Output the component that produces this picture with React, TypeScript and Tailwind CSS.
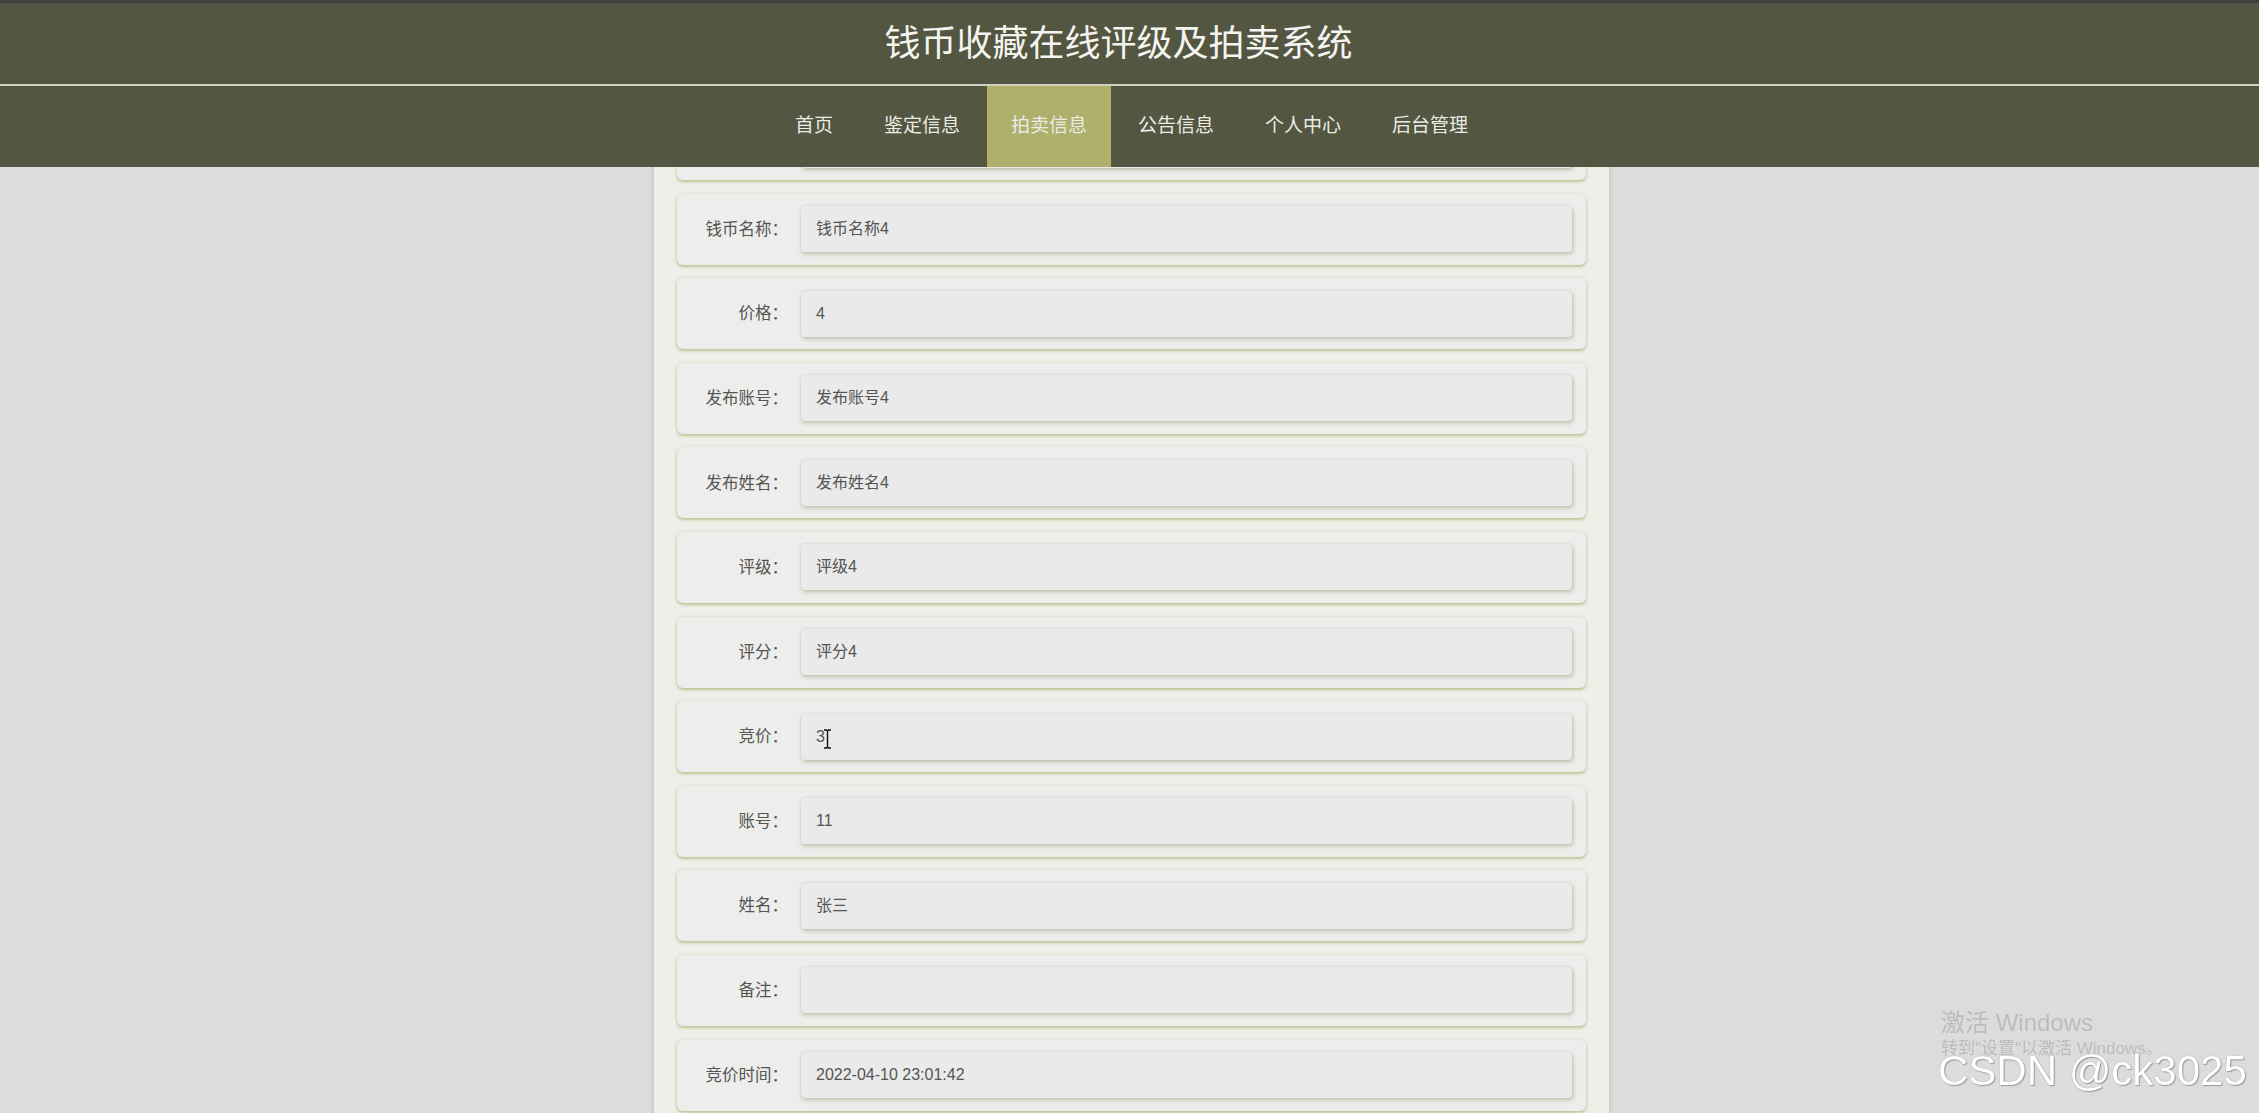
import React from 'react';

interface Field {
  label: string;
  value: string;
  cursor?: boolean;
}

const navItems = ['首页', '鉴定信息', '拍卖信息', '公告信息', '个人中心', '后台管理'];

const fields: Field[] = [
  { label: '钱币编号：', value: '4' },
  { label: '钱币名称：', value: '钱币名称4' },
  { label: '价格：', value: '4' },
  { label: '发布账号：', value: '发布账号4' },
  { label: '发布姓名：', value: '发布姓名4' },
  { label: '评级：', value: '评级4' },
  { label: '评分：', value: '评分4' },
  { label: '竞价：', value: '3', cursor: true },
  { label: '账号：', value: '11' },
  { label: '姓名：', value: '张三' },
  { label: '备注：', value: '' },
  { label: '竞价时间：', value: '2022-04-10 23:01:42' },
  { label: '', value: '' },
];

const TextCursor = () => (
  <svg width="9" height="20" viewBox="0 0 9 20" className="-ml-[2px] mt-[4px]">
    <path d="M1 1h2.5l1 1 1-1H8M1 19h2.5l1-1 1 1H8M4.5 2v16" stroke="#111" strokeWidth="1.4" fill="none" />
  </svg>
);

const Header = () => (
  <div className="fixed top-0 left-0 right-0 z-20">
    <div className="h-[3px] bg-[#3e403f]" />
    <div className="h-[81px] bg-[#535640] flex items-center justify-center pr-[22px]">
      <h1 className="text-[36px] text-[#f4f4f0] leading-none">钱币收藏在线评级及拍卖系统</h1>
    </div>
    <div className="h-[2px] bg-[#cfd0c2]" />
    <nav className="h-[81px] bg-[#535640] flex justify-center gap-[3px] pl-[4px]">
      {navItems.map((item) => (
        <a
          key={item}
          className={`px-[24px] flex items-center text-[19px] text-[#ebebe6] ${
            item === '拍卖信息' ? 'bg-[#aeb06b]' : ''
          }`}
        >
          {item}
        </a>
      ))}
    </nav>
  </div>
);

const FieldRow = ({ field }: { field: Field }) => (
  <div className="h-[71px] flex items-center rounded-[6px] bg-[#ededeb] shadow-[0_2px_3px_rgba(160,165,95,0.55),0_0_4px_rgba(180,185,140,0.35)]">
    <label className="w-[111px] text-right text-[16.5px] text-[#555]">{field.label}</label>
    <div className="ml-[13px] mr-[14px] flex-1 h-[46px] rounded-[4px] bg-[#eaeaea] pl-[15px] flex items-center text-[16px] text-[#555] shadow-[1px_2px_4px_rgba(140,145,100,0.45),0_0_2px_rgba(150,150,130,0.3)]">
      {field.value}
      {field.cursor && <TextCursor />}
    </div>
  </div>
);

export default function App() {
  return (
    <div
      className="min-h-screen bg-[#dcdcdc] overflow-hidden"
      style={{ fontFamily: '"Liberation Sans", "Noto Sans CJK SC", sans-serif' }}
    >
      <Header />

      <main className="w-[955px] ml-[654px] bg-[#efefea] px-[23px] pt-[109px] pb-[40px] shadow-[0_0_5px_rgba(120,125,90,0.35)] flex flex-col gap-[13.6px]">
        {fields.map((field, i) => (
          <FieldRow key={i} field={field} />
        ))}
      </main>

      <div className="fixed left-[1941px] top-[1008px] text-[#bcbcbc] leading-tight pointer-events-none whitespace-nowrap">
        <div className="text-[24px]">激活 Windows</div>
        <div className="text-[17px]">转到"设置"以激活 Windows。</div>
      </div>
      <div className="fixed left-[1938px] top-[1050px] text-[42px] leading-none text-white whitespace-nowrap [text-shadow:0_0_1px_#8a8a8a,1px_1px_1px_#9a9a9a] pointer-events-none">
        CSDN @ck3025
      </div>
    </div>
  );
}
